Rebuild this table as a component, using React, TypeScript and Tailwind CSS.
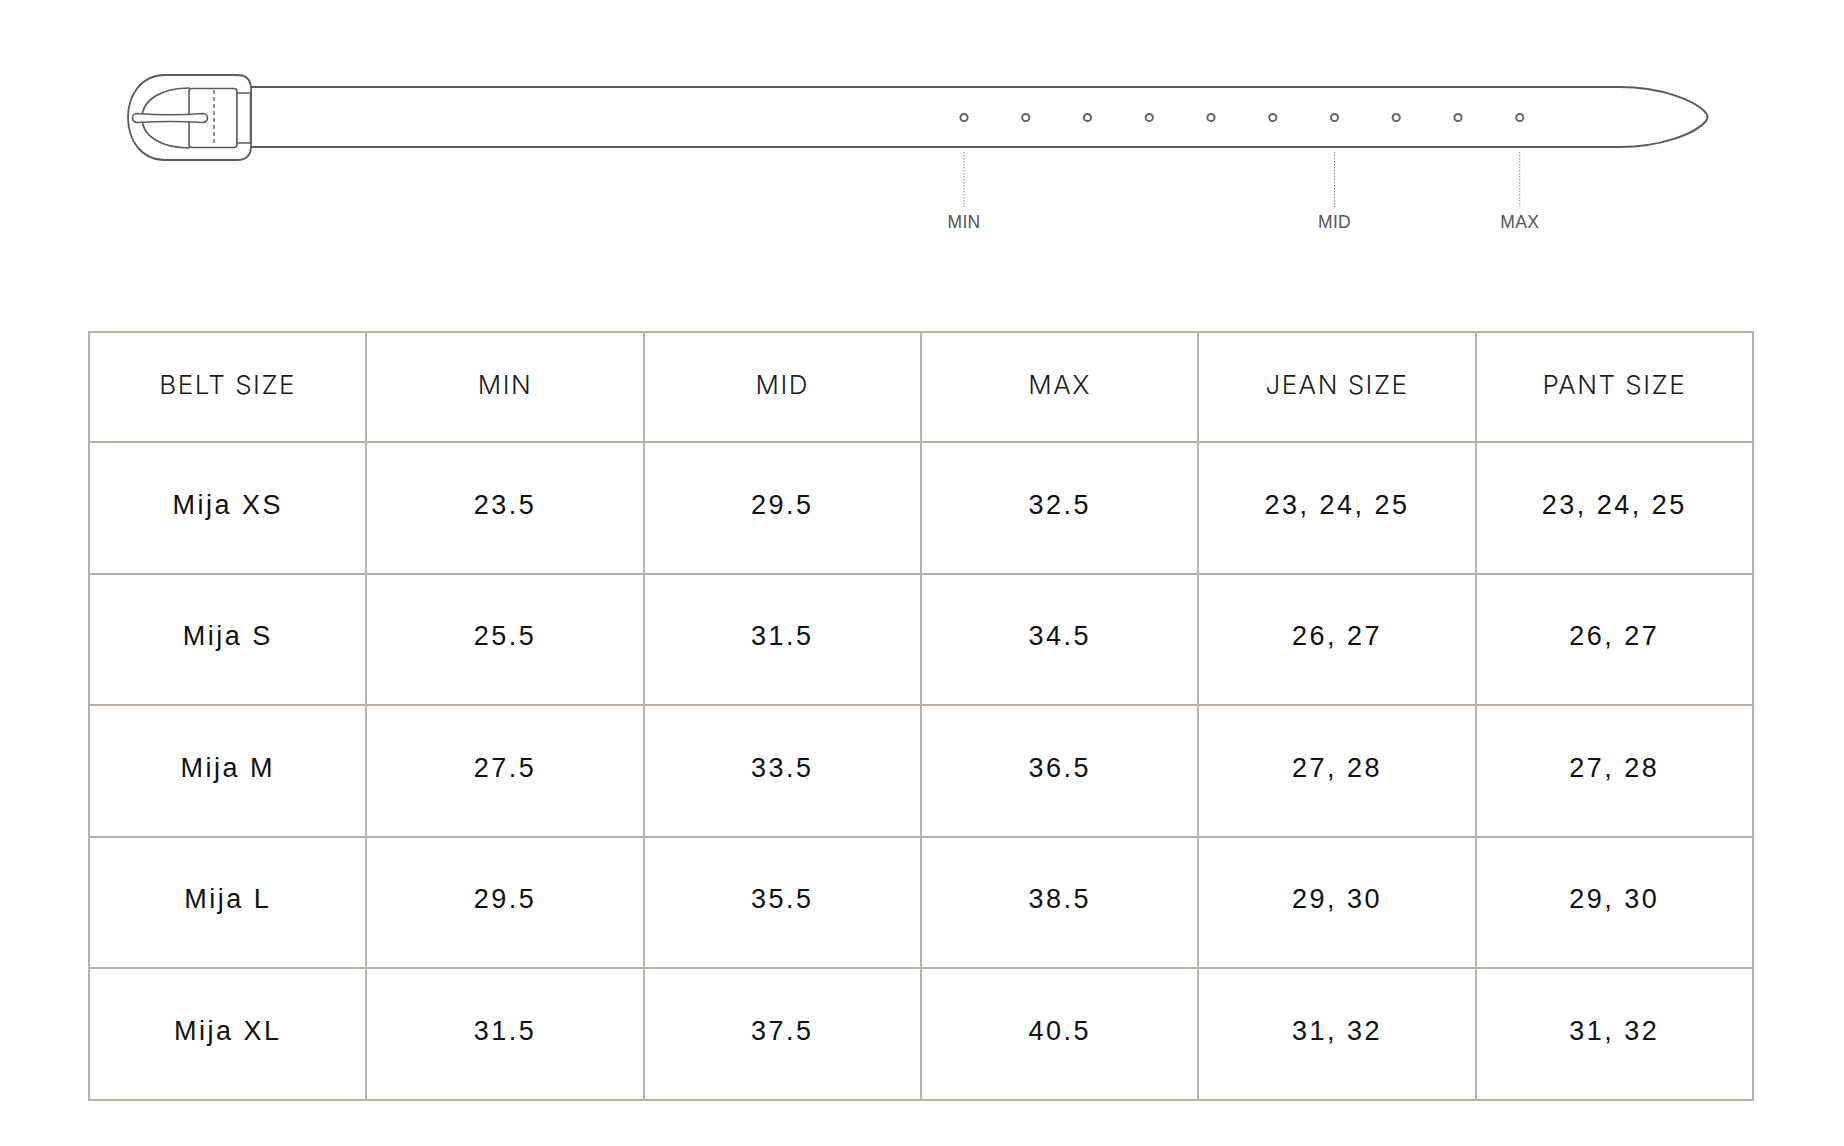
import React from "react";

const rows = [
  ["Mija XS", "23.5", "29.5", "32.5", "23, 24, 25", "23, 24, 25"],
  ["Mija S", "25.5", "31.5", "34.5", "26, 27", "26, 27"],
  ["Mija M", "27.5", "33.5", "36.5", "27, 28", "27, 28"],
  ["Mija L", "29.5", "35.5", "38.5", "29, 30", "29, 30"],
  ["Mija XL", "31.5", "37.5", "40.5", "31, 32", "31, 32"],
];

const headers = ["BELT SIZE", "MIN", "MID", "MAX", "JEAN SIZE", "PANT SIZE"];

function Belt() {
  const holes = Array.from({ length: 10 }, (_, i) => 964 + i * 61.75);
  const stroke = "#5c5c5c";
  const labels: [number, string][] = [
    [holes[0], "MIN"],
    [holes[6], "MID"],
    [holes[9], "MAX"],
  ];
  return (
    <svg width="1844" height="300" viewBox="0 0 1844 300" className="block">
      <path
        d="M251 87 L1620 87 C1660 87 1695 100 1706 113 Q1709 117 1706 121 C1695 134 1660 147 1620 147 L251 147"
        fill="none"
        stroke={stroke}
        strokeWidth="2"
      />
      <path
        d="M165 75 L237 75 Q251 75 251 89 L251 146 Q251 160 237 160 L165 160 C142 160 128 141 128 117.5 C128 94 142 75 165 75 Z"
        fill="none"
        stroke={stroke}
        strokeWidth="1.8"
      />
      <path
        d="M190 88 C161 88 142 100 142 118 C142 136 161 148 190 148"
        fill="none"
        stroke={stroke}
        strokeWidth="1.6"
      />
      <rect x="189" y="88.5" width="48" height="59" rx="3" fill="white" stroke={stroke} strokeWidth="1.6" />
      <line x1="214" y1="90" x2="214" y2="146" stroke={stroke} strokeWidth="1.4" strokeDasharray="4 3" />
      <rect x="237" y="93" width="13.5" height="50" fill="white" stroke={stroke} strokeWidth="1.5" />
      <path
        d="M137 113.5 Q170 116 203 113.5 A4.5 4.5 0 0 1 203 122.5 Q170 120.5 137 122.5 A4.5 4.5 0 0 1 137 113.5 Z"
        fill="white"
        stroke={stroke}
        strokeWidth="1.6"
      />
      {holes.map((x) => (
        <circle key={x} cx={x} cy="117.5" r="3.6" fill="none" stroke="#666" strokeWidth="2" />
      ))}
      {labels.map(([x, t]) => (
        <g key={t}>
          <line x1={x} y1="152" x2={x} y2="207" stroke="#8a8a8a" strokeWidth="1" strokeDasharray="1.5 1.5" />
          <text
            x={x}
            y="228"
            textAnchor="middle"
            fontSize="17.5"
            letterSpacing="0.3"
            fill="#555"
            fontFamily="'Liberation Sans', Arial, sans-serif"
          >
            {t}
          </text>
        </g>
      ))}
    </svg>
  );
}

export default function App() {
  return (
    <div className="w-[1844px] h-[1146px] bg-white overflow-hidden">
      <Belt />
      <div className="ml-[88px] mt-[31px] w-[1666px] grid grid-cols-6 border-l-2 border-t-2 border-[#b9b0a7]">
        {headers.map((h) => (
          <div
            key={h}
            className="h-[110px] border-r-2 border-b-2 border-[#b9b0a7] flex items-center justify-center pb-[6px] text-[26px] font-light tracking-[1.5px] text-[#1c1c1c] font-['Inter',sans-serif]"
          >
            {h}
          </div>
        ))}
        {rows.map((r) =>
          r.map((c, i) => (
            <div
              key={r[0] + i}
              className="h-[131.5px] border-r-2 border-b-2 border-[#b9b0a7] flex items-center justify-center pb-[6px] text-[27px] tracking-[2.5px] text-[#111] font-['Liberation_Sans',Arial,sans-serif]"
            >
              {c}
            </div>
          ))
        )}
      </div>
    </div>
  );
}
